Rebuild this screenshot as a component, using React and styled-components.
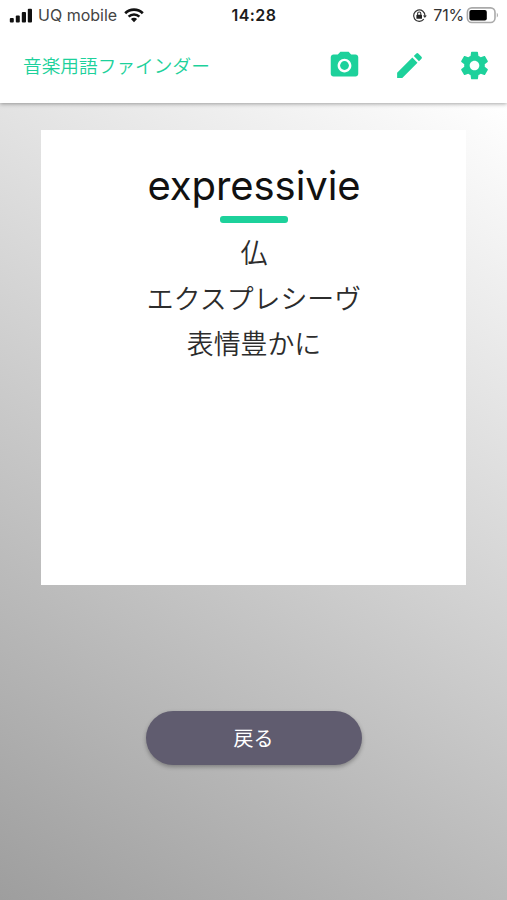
import React from "react";
import styled, { createGlobalStyle } from "styled-components";
import { MdCameraAlt, MdEdit } from "react-icons/md";

const GlobalStyle = createGlobalStyle`
  * {
    box-sizing: border-box;
  }
  body {
    margin: 0;
    font-family: Inter, "Noto Sans CJK JP", sans-serif;
  }
`;
const Screen = styled.div`
  display: flex;
  flex-direction: column;
  width: 507px;
  height: 900px;
  overflow: hidden;
`;
const Header = styled.header`
  position: relative;
  z-index: 1;
  height: 103px;
  background-color: white;
  box-shadow: 0 1px 4px rgba(0, 0, 0, 0.35);
`;
const StatusBar = styled.div`
  display: grid;
  grid-template-columns: 1fr auto 1fr;
  align-items: center;
  height: 30px;
  padding: 0 8px 0 9px;
`;
const StatusGroup = styled.div`
  display: flex;
  align-items: center;
  justify-content: ${(props) => (props.$end ? "flex-end" : "flex-start")};
`;
const Carrier = styled.span`
  margin: 0 7px 0 5px;
  font-size: 16px;
  color: #444;
`;
const Clock = styled.span`
  font-weight: 600;
  font-size: 16px;
  letter-spacing: 0.45px;
  color: #1c1c1c;
`;
const Percent = styled.span`
  margin: 0 2px 0 6px;
  font-size: 16px;
  letter-spacing: -0.2px;
  color: #333;
`;
const AppBar = styled.div`
  display: flex;
  align-items: center;
  justify-content: space-between;
  height: 71px;
  padding: 0 16px 0 23px;
`;
const AppTitle = styled.h1`
  margin: 0;
  padding-top: 2px;
  color: #1dd19b;
  font-size: 18.7px;
  font-weight: 350;
  line-height: 28px;
`;
const Actions = styled.div`
  display: flex;
  gap: 32px;
`;
const IconBtn = styled.button`
  display: flex;
  padding: 0;
  color: #1dd19b;
  font-size: 33px;
  background: none;
  border: none;
  cursor: pointer;
`;
const Main = styled.main`
  flex: 1;
  display: flex;
  flex-direction: column;
  align-items: center;
  padding-top: 27px;
  background: linear-gradient(212.5deg, #ffffff, #9e9e9e);
`;
const Card = styled.section`
  display: flex;
  flex-direction: column;
  align-items: center;
  width: 425px;
  height: 455px;
  padding: 32px 0 0 1px;
  background-color: white;
`;
const Term = styled.h2`
  margin: 0;
  color: #111;
  font-size: 40px;
  font-weight: 400;
  line-height: 48px;
  letter-spacing: -0.08px;
`;
const Bar = styled.div`
  width: 68px;
  height: 7px;
  margin: 6px 0 8px;
  background-color: #1dd19b;
  border-radius: 3px;
`;
const Line = styled.p`
  margin: 0;
  color: #2c2c2c;
  font-size: 26.9px;
  font-weight: 350;
  line-height: 45.5px;
`;
const BackBtn = styled.button`
  width: 216px;
  height: 54px;
  margin-top: 126px;
  padding: 2px 0 0;
  color: white;
  font-family: inherit;
  font-size: 20px;
  line-height: 28px;
  background-color: #605c6f;
  border: none;
  border-radius: 27px;
  box-shadow: 0 2px 4px rgba(0, 0, 0, 0.3);
  cursor: pointer;
`;

const SignalIcon = () => (
  <svg width="24" height="15" viewBox="0 0 24 15" fill="#111">
    <rect x="0.8" y="10" width="4" height="4.4" rx="1" />
    <rect x="6.8" y="7.4" width="4" height="7" rx="1" />
    <rect x="12.8" y="4" width="4.2" height="10.4" rx="1" />
    <rect x="18.8" y="0.8" width="4.2" height="13.6" rx="1" />
  </svg>
);

const WifiIcon = () => (
  <svg width="20" height="15" viewBox="0 0 20 15" fill="none" stroke="#111">
    <path d="M1.2 5.2a12.6 12.6 0 0 1 17.6 0" strokeWidth="2.7" />
    <path d="M4.6 8.6a7.8 7.8 0 0 1 10.8 0" strokeWidth="2.5" />
    <path d="M10 14.2 6.9 11.1a4.4 4.4 0 0 1 6.2 0Z" fill="#111" stroke="none" />
  </svg>
);

const LockIcon = () => (
  <svg width="15" height="15" viewBox="0 0 15 15" fill="none" stroke="#333">
    <path d="M11.8 11.2a5.7 5.7 0 1 1 1.2-3.2" strokeWidth="1.2" />
    <path d="M10.9 7.4h3.9L12.9 10Z" fill="#333" stroke="none" />
    <rect x="4.4" y="6.8" width="5.6" height="4" rx="0.6" fill="#222" stroke="none" />
    <path d="M5.6 7V5.6a1.6 1.6 0 0 1 3.2 0V7" strokeWidth="1.1" />
  </svg>
);

const BatteryIcon = () => (
  <svg width="33" height="17" viewBox="0 0 33 17">
    <rect x="1.4" y="0.9" width="27.6" height="14.6" rx="4.4" fill="none" stroke="#aaa" strokeWidth="1.6" />
    <rect x="3.4" y="3" width="17.4" height="10.4" rx="2" fill="#000" />
    <path d="M30.8 5.8c1.6.8 1.6 4 0 4.8Z" fill="#aaa" />
  </svg>
);

const GearIcon = () => (
  <svg width="1em" height="1em" viewBox="0 0 24 24" fill="currentColor">
    <path d="M19.43 12.98c.04-.32.07-.64.07-.98s-.03-.66-.07-.98l2.11-1.65c.19-.15.24-.42.12-.64l-2-3.46c-.12-.22-.39-.3-.61-.22l-2.49 1c-.52-.4-1.08-.73-1.69-.98l-.38-2.65C14.46 2.18 14.25 2 14 2h-4c-.25 0-.46.18-.49.42l-.38 2.65c-.61.25-1.17.59-1.69.98l-2.49-1c-.23-.09-.49 0-.61.22l-2 3.46c-.13.22-.07.49.12.64l2.11 1.65c-.04.32-.07.65-.07.98s.03.66.07.98l-2.11 1.65c-.19.15-.24.42-.12.64l2 3.46c.12.22.39.3.61.22l2.49-1c.52.4 1.08.73 1.69.98l.38 2.65c.03.24.24.42.49.42h4c.25 0 .46-.18.49-.42l.38-2.65c.61-.25 1.17-.59 1.69-.98l2.49 1c.23.09.49 0 .61-.22l2-3.46c.12-.22.07-.49-.12-.64l-2.11-1.65zM12 15.5c-1.93 0-3.5-1.57-3.5-3.5s1.57-3.5 3.5-3.5 3.5 1.57 3.5 3.5-1.57 3.5-3.5 3.5z" />
  </svg>
);

const actions = [
  { name: "camera", icon: <MdCameraAlt /> },
  { name: "edit", icon: <MdEdit /> },
  { name: "settings", icon: <GearIcon /> },
];

const word = {
  term: "expressivie",
  lines: ["仏", "エクスプレシーヴ", "表情豊かに"],
};

const App = () => {
  return (
    <>
      <GlobalStyle />
      <Screen lang="ja">
        <Header>
          <StatusBar>
            <StatusGroup>
              <SignalIcon />
              <Carrier>UQ mobile</Carrier>
              <WifiIcon />
            </StatusGroup>
            <Clock>14:28</Clock>
            <StatusGroup $end>
              <LockIcon />
              <Percent>71%</Percent>
              <BatteryIcon />
            </StatusGroup>
          </StatusBar>
          <AppBar>
            <AppTitle>音楽用語ファインダー</AppTitle>
            <Actions>
              {actions.map((item) => {
                return (
                  <IconBtn key={item.name} aria-label={item.name}>
                    {item.icon}
                  </IconBtn>
                );
              })}
            </Actions>
          </AppBar>
        </Header>
        <Main>
          <Card>
            <Term>{word.term}</Term>
            <Bar />
            {word.lines.map((line, idx) => {
              return <Line key={idx}>{line}</Line>;
            })}
          </Card>
          <BackBtn>戻る</BackBtn>
        </Main>
      </Screen>
    </>
  );
};

export default App;
